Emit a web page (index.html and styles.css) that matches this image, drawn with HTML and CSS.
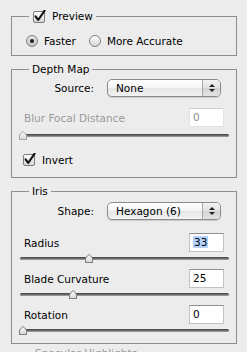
FILE: index.html
```html
<!DOCTYPE html>
<html lang="en">
<head>
  <meta charset="UTF-8">
  <title>Lens Blur</title>
  <link rel="stylesheet" href="styles.css">
</head>
<body>
  <div class="panel">
    <fieldset class="group group-preview">
      <legend>
        <label class="check">
          <svg class="check-box" width="14" height="13" viewBox="0 0 14 13">
            <defs>
              <linearGradient id="cb" x1="0" y1="0" x2="0" y2="1">
                <stop offset="0" stop-color="#ffffff"/>
                <stop offset="1" stop-color="#d4d4d4"/>
              </linearGradient>
            </defs>
            <rect x="0.5" y="1.5" width="11" height="11" rx="1.5" fill="url(#cb)" stroke="#7c7c7c"/>
            <path d="M2.6 6.4 L5.2 10 L11.6 0.6" fill="none" stroke="#111" stroke-width="2.1" stroke-linecap="round" stroke-linejoin="round"/>
          </svg>
          Preview
        </label>
      </legend>
      <div class="radios">
        <label class="radio"><span class="dot on"></span>Faster</label>
        <label class="radio"><span class="dot"></span>More Accurate</label>
      </div>
    </fieldset>

    <fieldset class="group group-depth">
      <legend>Depth Map</legend>
      <div class="select-row">
        <span class="select-label">Source:</span>
        <div class="popup">
          <span class="popup-text">None</span>
          <span class="popup-arrows"><i class="up"></i><i class="down"></i></span>
        </div>
      </div>
      <div class="field disabled">
        <div class="field-top">
          <span>Blur Focal Distance</span>
          <span class="num">0</span>
        </div>
        <div class="slider"><div class="track"></div><div class="thumb" style="--v: 0"></div></div>
      </div>
      <div class="invert">
        <label class="check">
          <svg class="check-box" width="14" height="13" viewBox="0 0 14 13">
            <rect x="0.5" y="1.5" width="11" height="11" rx="1.5" fill="url(#cb)" stroke="#7c7c7c"/>
            <path d="M2.6 6.4 L5.2 10 L11.6 0.6" fill="none" stroke="#111" stroke-width="2.1" stroke-linecap="round" stroke-linejoin="round"/>
          </svg>
          Invert
        </label>
      </div>
    </fieldset>

    <fieldset class="group group-iris">
      <legend>Iris</legend>
      <div class="select-row">
        <span class="select-label">Shape:</span>
        <div class="popup">
          <span class="popup-text">Hexagon (6)</span>
          <span class="popup-arrows"><i class="up"></i><i class="down"></i></span>
        </div>
      </div>
      <div class="field">
        <div class="field-top">
          <span>Radius</span>
          <span class="num"><span class="sel">33</span></span>
        </div>
        <div class="slider"><div class="track"></div><div class="thumb" style="--v: 33"></div></div>
      </div>
      <div class="field">
        <div class="field-top">
          <span>Blade Curvature</span>
          <span class="num">25</span>
        </div>
        <div class="slider"><div class="track"></div><div class="thumb" style="--v: 25"></div></div>
      </div>
      <div class="field">
        <div class="field-top">
          <span>Rotation</span>
          <span class="num">0</span>
        </div>
        <div class="slider"><div class="track"></div><div class="thumb" style="--v: 0"></div></div>
      </div>
    </fieldset>

    <div class="next">Specular Highlights</div>
  </div>
</body>
</html>
```

FILE: styles.css
```css
body {
  margin: 0;
  height: 352px;
  overflow: hidden;
  background-color: #ececec;
  font-family: 'DejaVu Sans', sans-serif;
  font-size: 10.5px;
  color: #000;
}
.panel {
  padding: 10px 10px 0 11px;
}
.group {
  margin: 0;
  padding: 0;
  min-width: 0;
  border: 1px solid #8e8e8e;
}
.group + .group {
  margin-top: 7px;
}
.group legend {
  margin-left: 17px;
  padding: 0 3px;
  height: 13px;
  line-height: 13px;
}
.check {
  display: flex;
  align-items: center;
  gap: 5px;
}
.group-preview legend .check {
  margin-left: 1px;
}
.check-box {
  display: block;
  margin-top: -1px;
}

/* radios */
.radios {
  display: flex;
  align-items: center;
  height: 14px;
  padding: 11px 0 7px 14px;
}
.radio {
  display: flex;
  align-items: center;
  gap: 6px;
  margin-right: 13px;
}
.dot {
  width: 10px;
  height: 10px;
  border-radius: 50%;
  border: 1px solid #7f7f7f;
  background: linear-gradient(#fdfdfd, #d6d6d6);
  display: flex;
  align-items: center;
  justify-content: center;
}
.dot.on {
  background: linear-gradient(#e4e4e4, #c4c4c4);
}
.dot.on::after {
  content: '';
  width: 4px;
  height: 4px;
  border-radius: 50%;
  background: #222;
}

/* popup menus */
.select-row {
  display: flex;
  align-items: center;
  height: 18px;
  margin-top: 3px;
}
.group-iris .select-row {
  margin-top: 4px;
}
.select-label {
  width: 82px;
  text-align: right;
}
.popup {
  margin-left: 13px;
  width: 112px;
  height: 16px;
  border: 1px solid #8a8a8a;
  border-radius: 5px;
  background: linear-gradient(#ffffff 0%, #f4f4f4 50%, #e6e6e6 51%, #f2f2f2 100%);
  display: flex;
  align-items: center;
  box-shadow: 0 1px 1px rgba(0,0,0,0.15);
}
.popup-text {
  flex: 1;
  padding-left: 8px;
}
.popup-arrows {
  width: 17px;
  height: 16px;
  border-left: 1px solid #a8a8a8;
  border-radius: 0 4px 4px 0;
  background: linear-gradient(#f2f2f2 0%, #e2e2e2 50%, #d2d2d2 51%, #e4e4e4 100%);
  display: flex;
  flex-direction: column;
  align-items: center;
  justify-content: center;
  gap: 2px;
}
.popup-arrows i {
  width: 0;
  height: 0;
  border-left: 3px solid transparent;
  border-right: 3px solid transparent;
}
.popup-arrows .up {
  border-bottom: 3px solid #222;
}
.popup-arrows .down {
  border-top: 3px solid #222;
}

/* number fields with sliders */
.group-depth .field {
  margin-top: 11px;
}
.group-iris .select-row + .field {
  margin-top: 13px;
}
.field-top {
  display: flex;
  align-items: center;
  justify-content: space-between;
  height: 19px;
  padding: 0 12px;
}
.num {
  box-sizing: border-box;
  width: 35px;
  height: 19px;
  line-height: 17px;
  padding-left: 3px;
  background: #fff;
  border: 1px solid #c2c2c2;
  border-top-color: #8f8f8f;
}
.sel {
  background: #b3d3fd;
  padding: 0 1px;
}
.disabled .field-top {
  color: #9a9a9a;
}
.disabled .num {
  color: #8a8a8a;
  border-color: #e2e2e2;
  border-top-color: #d0d0d0;
}
.slider {
  position: relative;
  height: 17px;
  margin: 0 7px 0 8px;
}
.group-depth .slider {
  margin-top: 2px;
}
.track {
  position: absolute;
  left: 0;
  right: 0;
  top: 5px;
  height: 3px;
  border-radius: 2px;
  background: linear-gradient(#3f3f3f, #7c7c7c 70%, #b4b4b4);
}
.thumb {
  position: absolute;
  top: 2px;
  left: calc(var(--v) * 2px - 1px);
  width: 8px;
  height: 9px;
  background: #7e7e7e;
  clip-path: polygon(50% 0, 100% 45%, 100% 100%, 0 100%, 0 45%);
}
.thumb::after {
  content: '';
  position: absolute;
  left: 1px;
  top: 1px;
  right: 1px;
  bottom: 1px;
  background: linear-gradient(#ffffff, #d8d8d8);
  clip-path: polygon(50% 0, 100% 45%, 100% 100%, 0 100%, 0 45%);
}
.disabled .thumb {
  background: #a4a4a4;
}
.group-iris .field:last-child .slider {
  height: 19px;
}
.invert {
  padding: 8px 0 11px 11px;
}
.next {
  padding: 3px 0 0 24px;
  color: #9a9a9a;
}
```
